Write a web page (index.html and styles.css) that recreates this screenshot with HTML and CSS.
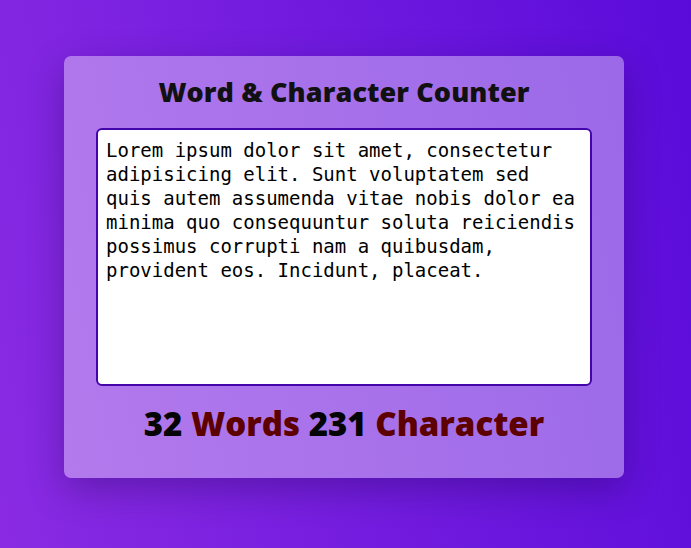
FILE: index.html
```html
<!DOCTYPE html>
<html lang="en">
<head>
<meta charset="utf-8">
<title>Word &amp; Character Counter</title>
<link rel="stylesheet" href="styles.css">
</head>
<body>
<main class="page">
  <section class="card">
    <h1 class="title">Word &amp; Character Counter</h1>
    <textarea class="editor" spellcheck="true">Lorem ipsum dolor sit amet, consectetur adipisicing elit. Sunt voluptatem sed quis autem assumenda vitae nobis dolor ea minima quo consequuntur soluta reiciendis possimus corrupti nam a quibusdam, provident eos. Incidunt, placeat.</textarea>
    <p class="stats"><span class="num">32</span> <span class="label">Words</span> <span class="num">231</span> <span class="label">Character</span></p>
  </section>
</main>
</body>
</html>
```

FILE: styles.css
```css
* { box-sizing: border-box; }
html, body { margin: 0; height: 100%; }
body {
  background: linear-gradient(78deg, #8a2be3 0%, #5a0bda 100%);
  font-family: "Open Sans", "DejaVu Sans", sans-serif;
}
.page {
  min-height: 100%;
  display: flex;
  justify-content: center;
  padding: 56px 3px 0 0;
}
.card {
  width: 560px;
  height: 422px;
  background: rgba(255, 255, 255, 0.38);
  border-radius: 7px;
  box-shadow: 0 12px 36px rgba(20, 0, 60, 0.3);
  padding: 18px 32px 0;
  display: flex;
  flex-direction: column;
  align-items: center;
}
.title {
  margin: 0;
  font-size: 27px;
  font-weight: 800;
  line-height: 36px;
  color: #111;
  letter-spacing: 0.1px;
}
.editor {
  margin-top: 18px;
  width: 496px;
  height: 258px;
  border: 2px solid #4406aa;
  border-radius: 6px;
  background: #fff;
  padding: 8px 8px;
  font-family: "DejaVu Sans Mono", monospace;
  font-size: 19px;
  line-height: 24px;
  color: #000;
  resize: none;
  outline: none;
}
.stats {
  margin: 16px 0 0;
  font-size: 33px;
  font-weight: 800;
  line-height: 44px;
}
.num { color: #050505; }
.label { color: #5c0000; }
```
